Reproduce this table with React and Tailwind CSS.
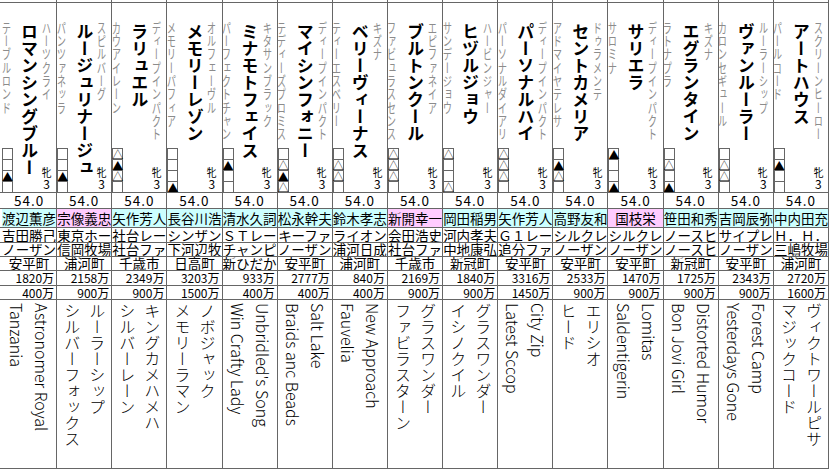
import React from 'react';

const DATA = [
  { sire: 'ハーツクライ', name: 'ロマンシングブルー', dam: 'テーブルロンド', marks: ['', '', '▲', ''], trainer: '渡辺薫彦', pink: false, owner: '吉田勝己', breeder: 'ノーザン', loc: '安平町', p1: '1820万', p2: '400万', lower: ['Astronomer Royal', 'Tanzania'] },
  { sire: 'スピルバーグ', name: 'ルージュリナージュ', dam: 'パンツァネッラ', marks: ['', '', '▲', ''], trainer: '宗像義忠', pink: true, owner: '東京ホー', breeder: '信岡牧場', loc: '浦河町', p1: '2158万', p2: '900万', lower: ['ルーラーシップ', 'シルバーフォックス'] },
  { sire: 'ディープインパクト', name: 'ラリュエル', dam: 'カウアイレーン', marks: ['△', '▲', '△', ''], trainer: '矢作芳人', pink: false, owner: '社台レー', breeder: '社台ファ', loc: '千歳市', p1: '2349万', p2: '900万', lower: ['キングカメハメハ', 'シルバーレーン'] },
  { sire: 'オルフェーヴル', name: 'メモリーレゾン', dam: 'メモリーパフィア', marks: ['', '', '', '▲'], trainer: '長谷川浩', pink: false, owner: 'シンザン', breeder: '下河辺牧', loc: '日高町', p1: '3203万', p2: '1500万', lower: ['ノボジャック', 'メモリーラマン'] },
  { sire: 'キタサンブラック', name: 'ミナモトフェイス', dam: 'パーフェクトチャン', marks: ['', '▲', '', ''], trainer: '清水久詞', pink: false, owner: 'ＳＴレー', breeder: 'チャンピ', loc: '新ひだか', p1: '933万', p2: '400万', lower: ["Unbridled's Song", 'Win Crafty Lady'] },
  { sire: 'ディープインパクト', name: 'マイシンフォニー', dam: 'テディーズプロミス', marks: ['', '△', '▲', '△'], trainer: '松永幹夫', pink: false, owner: 'キーファ', breeder: 'ノーザン', loc: '安平町', p1: '2777万', p2: '400万', lower: ['Salt Lake', 'Braids anc Beads'] },
  { sire: 'キズナ', name: 'ベリーヴィーナス', dam: 'ティーエスベリー', marks: ['', '△', '△', ''], trainer: '鈴木孝志', pink: false, owner: 'ライオン', breeder: '浦河日成', loc: '浦河町', p1: '840万', p2: '400万', lower: ['New Approach', 'Fauvelia'] },
  { sire: 'エピファネイア', name: 'ブルトンクール', dam: 'ファビュラスセンス', marks: ['△', '△', '△', ''], trainer: '新開幸一', pink: true, owner: '会田浩史', breeder: '社台ファ', loc: '千歳市', p1: '2169万', p2: '900万', lower: ['グラスワンダー', 'ファビラスターン'] },
  { sire: 'ハービンジャー', name: 'ヒヅルジョウ', dam: 'サンデージョウ', marks: ['△', '', '', '△'], trainer: '岡田稲男', pink: false, owner: '河内孝夫', breeder: '中地康弘', loc: '新冠町', p1: '1840万', p2: '900万', lower: ['グラスワンダー', 'イシノクイル'] },
  { sire: 'ディープインパクト', name: 'パーソナルハイ', dam: 'パーソナルダイアリ', marks: ['△', '△', '△', ''], trainer: '矢作芳人', pink: false, owner: 'Ｇ１レー', breeder: '追分ファ', loc: '安平町', p1: '3316万', p2: '1450万', lower: ['City Zip', 'Latest Sccop'] },
  { sire: 'ドゥラメンテ', name: 'セントカメリア', dam: 'アドマイヤテレサ', marks: ['', '▲', '△', ''], trainer: '高野友和', pink: false, owner: 'シルクレ', breeder: 'ノーザン', loc: '安平町', p1: '2533万', p2: '900万', lower: ['エリシオ', 'ヒード'] },
  { sire: 'ディープインパクト', name: 'サリエラ', dam: 'サロミナ', marks: ['▲', '', '', '▲'], trainer: '国枝栄', pink: true, owner: 'シルクレ', breeder: 'ノーザン', loc: '安平町', p1: '1470万', p2: '900万', lower: ['Lomitas', 'Saldentigerin'] },
  { sire: 'キズナ', name: 'エグランタイン', dam: 'ラトナプラ', marks: ['', '△', '', '▲'], trainer: '笹田和秀', pink: false, owner: 'ノースヒ', breeder: 'ノースヒ', loc: '新冠町', p1: '1725万', p2: '900万', lower: ['Distorted Humor', 'Bon Jovi Girl'] },
  { sire: 'ルーラーシップ', name: 'ヴァンルーラー', dam: 'カロンセギュール', marks: ['', '△', '△', ''], trainer: '吉岡辰弥', pink: false, owner: 'サイプレ', breeder: 'ノーザン', loc: '安平町', p1: '2343万', p2: '900万', lower: ['Forest Camp', 'Yesterdays Gone'] },
  { sire: 'スクリーンヒーロー', name: 'アートハウス', dam: 'パールコード', marks: ['', '▲', '', ''], trainer: '中内田充', pink: false, owner: 'Ｈ．Ｈ．', breeder: '三嶋牧場', loc: '浦河町', p1: '2720万', p2: '1600万', lower: ['ヴィクトワールピサ', 'マジックコード'] },
];

function Row({ className, children }) {
  return (
    <div className={`grid grid-cols-[repeat(15,minmax(0,1fr))] pl-[2px] border-b border-[#666] ${className}`}>
      {children}
    </div>
  );
}

function Gray({ text }) {
  return (
    <div className="w-[8px] flex justify-center">
      <div className="[writing-mode:vertical-rl] text-[13.3px] leading-[13px] text-[#8c8c8c] scale-x-[0.7] whitespace-nowrap">
        {text}
      </div>
    </div>
  );
}

function Marks({ marks }) {
  return (
    <div className="w-[11px] border-l border-r border-[#666]">
      {marks.map((m, i) => (
        <div key={i} className="h-[11px] border-t border-[#666] flex items-center justify-center text-[11px] leading-[10px]">
          {m}
        </div>
      ))}
    </div>
  );
}

function NameCell({ d }) {
  return (
    <div className="border-r border-[#666] flex pt-[18px] overflow-hidden">
      <div className="w-[11px] flex flex-col justify-between">
        <Gray text={d.dam} />
        <Marks marks={d.marks} />
      </div>
      <div className="w-[16px] ml-[8px] flex justify-center pt-[2px]">
        <div className="[writing-mode:vertical-rl] text-[17px] leading-[16px] font-bold whitespace-nowrap">
          {d.name}
        </div>
      </div>
      <div className="w-[9px] ml-[5px] flex flex-col justify-between items-center pb-[3px]">
        <Gray text={d.sire} />
        <div className="flex flex-col items-center">
          <div className="text-[11.5px] leading-[11px] scale-x-[0.85]">牝</div>
          <div className="text-[12px] leading-[11px]">3</div>
        </div>
      </div>
    </div>
  );
}

export default function App() {
  return (
    <div className="w-[829px] h-[470px] overflow-hidden bg-white text-black font-['Noto_Sans_CJK_JP','Noto_Sans',sans-serif]">
      <Row className="h-[3px]">
        {DATA.map((d, i) => <div key={i} className="border-r border-[#666]" />)}
      </Row>
      <Row className="h-[190px]">
        {DATA.map((d, i) => <NameCell key={i} d={d} />)}
      </Row>
      <Row className="h-[16px]">
        {DATA.map((d, i) => (
          <div key={i} className="border-r border-[#666] text-center text-[13.5px] leading-[15px] tracking-[1px]">54.0</div>
        ))}
      </Row>
      <Row className="h-[19px]">
        {DATA.map((d, i) => (
          <div key={i} className={`border-r border-[#666] text-center text-[13.5px] leading-[18px] whitespace-nowrap overflow-hidden ${d.pink ? 'bg-[#ffccff]' : 'bg-[#ccffff]'}`}>
            {d.trainer}
          </div>
        ))}
      </Row>
      <Row className="h-[15px]">
        {DATA.map((d, i) => (
          <div key={i} className="border-r border-[#666] text-center text-[13.5px] leading-[14px] whitespace-nowrap overflow-hidden">{d.owner}</div>
        ))}
      </Row>
      <Row className="h-[14px]">
        {DATA.map((d, i) => (
          <div key={i} className="border-r border-[#666] text-center text-[13.5px] leading-[13px] whitespace-nowrap overflow-hidden">{d.breeder}</div>
        ))}
      </Row>
      <Row className="h-[14px]">
        {DATA.map((d, i) => (
          <div key={i} className="border-r border-[#666] text-center text-[13.5px] leading-[13px] whitespace-nowrap overflow-hidden">{d.loc}</div>
        ))}
      </Row>
      <Row className="h-[15px]">
        {DATA.map((d, i) => (
          <div key={i} className="border-r border-[#666] text-right pr-[2px] text-[12px] leading-[14px] whitespace-nowrap overflow-hidden">{d.p1}</div>
        ))}
      </Row>
      <Row className="h-[14px]">
        {DATA.map((d, i) => (
          <div key={i} className="border-r border-[#666] text-right pr-[2px] text-[12px] leading-[13px] whitespace-nowrap overflow-hidden">{d.p2}</div>
        ))}
      </Row>
      <Row className="h-[169px]">
        {DATA.map((d, i) => (
          <div key={i} className="border-r border-[#666] flex justify-center pt-[3px] overflow-hidden">
            <div className="[writing-mode:vertical-rl] text-[16px] leading-[25px] font-light whitespace-nowrap">
              {d.lower[0]}
              <br />
              {d.lower[1]}
            </div>
          </div>
        ))}
      </Row>
    </div>
  );
}
